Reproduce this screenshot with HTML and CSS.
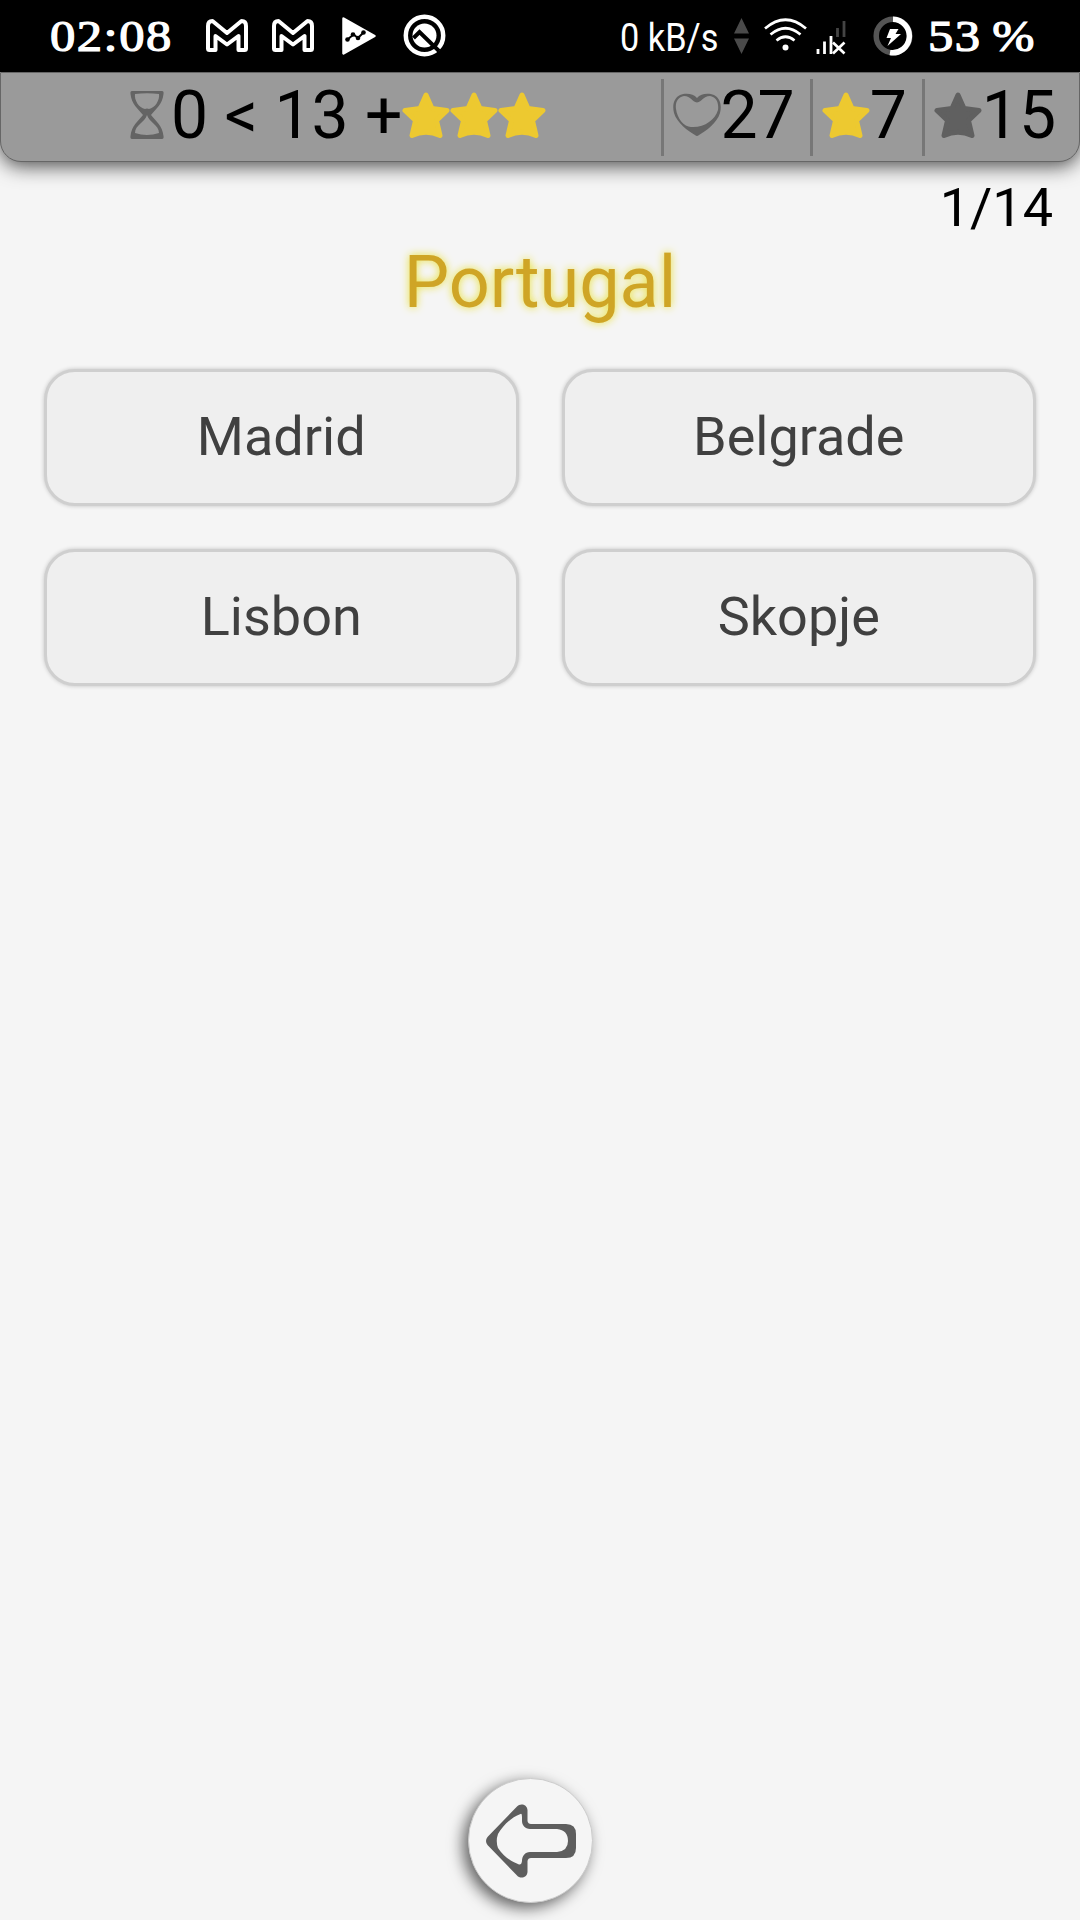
FILE: index.html
```html
<!DOCTYPE html>
<html lang="en">
<head>
    <meta charset="UTF-8">
    <meta name="viewport" content="width=device-width, initial-scale=1.0">
    <title>Capitals Quiz</title>
    <link rel="stylesheet" href="styles.css">
</head>
<body>
    <svg width="0" height="0" class="defs">
        <symbol id="star" viewBox="0 0 48 48">
            <path d="M24 4L30 17.5L45 19.5L34.5 29.5L38 44.5Q24 38 10 44.5L13.5 29.5L3 19.5L18 17.5Z" fill="currentColor" stroke="currentColor" stroke-width="5" stroke-linejoin="round"/>
        </symbol>
        <symbol id="gmail" viewBox="0 0 42 34">
            <path d="M2 7V29.500Q2 31 3.500 31H9.500V17L21 25.500L32.500 17V31H38.500Q40 31 40 29.500V7Q40 2 35.500 2L21 14L6.500 2Q2 2 2 7Z" fill="none" stroke="#fff" stroke-width="4" stroke-linejoin="round"/>
        </symbol>
    </svg>

    <div class="status">
        <span class="clock">02:08</span>
        <svg class="gmail" width="42" height="34"><use href="#gmail"/></svg>
        <svg class="gmail" width="42" height="34"><use href="#gmail"/></svg>
        <svg class="play" width="34" height="38" viewBox="0 0 34 38">
            <path d="M1.500 1.500L32.500 19L1.500 36.500Z" fill="#fff" stroke="#fff" stroke-width="2.500" stroke-linejoin="round"/>
            <path d="M5.500 22.500L11.500 17.500L16 21L21.500 15.500" fill="none" stroke="#000" stroke-width="2"/>
            <g fill="#000"><circle cx="5.500" cy="22.500" r="2.300"/><circle cx="11" cy="17.500" r="2.300"/><circle cx="16" cy="21" r="2.300"/><circle cx="21.500" cy="15.500" r="2.300"/></g>
        </svg>
        <svg class="quick" width="43" height="43" viewBox="0 0 43 43">
            <circle cx="21.500" cy="21.500" r="18.700" fill="none" stroke="#fff" stroke-width="4.500"/>
            <circle cx="21.500" cy="21.500" r="12" fill="#fff"/>
            <path d="M10.500 24L16.500 18L36 37" fill="none" stroke="#000" stroke-width="4"/>
        </svg>

        <span class="speed">0 kB/s</span>
        <svg class="updown" width="15" height="36" viewBox="0 0 15 36"><path d="M7.500 0L15 15.500H0ZM0 20.500H15L7.500 36Z" fill="#4a4a4a"/></svg>
        <svg class="wifi" width="43" height="34" viewBox="0 0 43 34">
            <g fill="none" stroke="#fff" stroke-width="2.700">
                <path d="M1 10.500Q21.500 -7 42 10.500"/>
                <path d="M6.500 16.500Q21.500 4 36.500 16.500"/>
                <path d="M12.500 22.500Q21.500 15 30.500 22.500"/>
            </g>
            <circle cx="21.500" cy="29.500" r="3" fill="#fff"/>
        </svg>
        <svg class="signal" width="30" height="34" viewBox="0 0 30 34">
            <path d="M2 28V33M8.500 20.500V33M15 15V33" stroke="#fff" stroke-width="2.800"/>
            <path d="M21.500 7V16M28 0V16" stroke="#444" stroke-width="2.800"/>
            <path d="M17 21.500L28.500 32.500M28.500 21.500L17 32.500" stroke="#fff" stroke-width="2.700"/>
        </svg>
        <svg class="charge" width="40" height="40" viewBox="0 0 40 40">
            <circle cx="20" cy="20" r="16.800" fill="none" stroke="#555" stroke-width="5.500"/>
            <path d="M20 3.200A16.800 16.800 0 1 1 17 36.600" fill="none" stroke="#fff" stroke-width="5.500"/>
            <path d="M17 13H25.500L22.500 18H28L14.500 30L18 22H13.500Z" fill="#fff"/>
        </svg>
        <span class="battery">53 %</span>
    </div>

    <div class="topbar">
        <div class="goal">
            <svg class="icon" viewBox="0 0 48 48">
                <path fill="#646464" fill-rule="evenodd" d="M9 0H39Q41 0 40.500 3C39.500 13 33 18 28 24C33 30 39.500 35 40.500 45Q41 48 39 48H9Q7 48 7.500 45C8.500 35 15 30 20 24C15 18 8.500 13 7.500 3Q7 0 9 0ZM12 3C11 9 16 17 22 18Q24 17 26 18C32 17 37 9 36 3Q24 1.500 12 3ZM24 24C22 31 12 34 12 42Q24 46 36 42C36 34 26 31 24 24Z"/>
            </svg>
            <span>0 &lt; 13 +</span>
            <svg class="icon gold"><use href="#star"/></svg>
            <svg class="icon gold"><use href="#star"/></svg>
            <svg class="icon gold"><use href="#star"/></svg>
        </div>
        <div class="counter">
            <svg class="icon" viewBox="0 0 48 48">
                <path fill="#646464" fill-rule="evenodd" d="M24 7C28 2 36 2 41 4C47 7 49 14 47 22C44 32 33 40 26 44Q24 46 22 44C15 40 4 32 1 22C-1 14 1 7 7 4C12 2 20 2 24 7ZM24 11.500C19 11 18 5 11 5C5 6 2 11 3 18C4 27 11 36 18 36C31 37 42 29 45 19C46 11 43 6 37 5C30 5 29 11 24 11.500Z"/>
            </svg>
            <span>27</span>
        </div>
        <div class="counter">
            <svg class="icon gold"><use href="#star"/></svg>
            <span>7</span>
        </div>
        <div class="counter">
            <svg class="icon gray"><use href="#star"/></svg>
            <span>15</span>
        </div>
    </div>

    <div class="progress">1/14</div>
    <h1>Portugal</h1>

    <div class="answers">
        <button>Madrid</button>
        <button>Belgrade</button>
        <button>Lisbon</button>
        <button>Skopje</button>
    </div>

    <button class="back" aria-label="Back">
        <svg width="90" height="74" viewBox="0 0 90 74">
            <path fill="#5e5e5e" fill-rule="evenodd" d="M1.500 33L31 2.500C34 -1 41 0 41.500 6V17Q42 20 45 20H80Q90 20 90 30V44Q90 54 80 54H45Q42 54 41.500 57V68C41 74 34 75 31 71.500L1.500 41Q-1.500 37 1.500 33ZM34.500 10C24 14 16 23 12 30Q9.500 37 12 44C18 53 26 58 33 60.500Q35.500 61 36 57C36 52 39 48 44 48H71Q82 47 82 37Q82 26 71 25H44C39 25 36 21 36 17V13Q36 9 34.500 10Z"/>
        </svg>
    </button>
</body>
</html>
```

FILE: styles.css
```css
* {
    box-sizing: border-box;
}
body {
    margin: 0;
    height: 1920px;
    display: flex;
    flex-direction: column;
    background-color: #f5f5f5;
    color: black;
    font-family: Roboto, sans-serif;
    overflow: hidden;
}
svg {
    display: block;
    flex: none;
}
.defs {
    position: absolute;
}
.status {
    height: 72px;
    flex: none;
    display: flex;
    align-items: flex-start;
    background-color: black;
    color: white;
    white-space: nowrap;
}
.clock, .battery {
    font-family: "Liberation Serif", serif;
    font-size: 44px;
    line-height: 50px;
    margin-top: 12px;
    transform: scaleX(1.15);
    transform-origin: 0 0;
    letter-spacing: 1.3px;
    -webkit-text-stroke: 1.2px white;
}
.clock {
    width: 156px;
    margin-left: 50px;
}
.gmail {
    margin-top: 19px;
    margin-right: 24px;
}
.play {
    margin: 17px 0 0 4px;
}
.quick {
    margin: 14px 0 0 27px;
}
.speed {
    width: 114px;
    margin: 15px 0 0 174px;
    font-size: 39px;
    line-height: 46px;
    transform: scaleX(0.88);
    transform-origin: 0 0;
}
.updown {
    margin: 18px 0 0 auto;
}
.wifi {
    margin: 18px 0 0 15px;
}
.signal {
    margin: 21px 0 0 9px;
}
.charge {
    margin: 16px 0 0 27px;
}
.battery {
    width: 152px;
    margin-left: 15px;
    word-spacing: -3px;
}
.topbar {
    height: 90px;
    flex: none;
    display: flex;
    align-items: center;
    padding-right: 8px;
    background-color: #9a9a9a;
    border: 1px solid #666;
    border-radius: 0 0 21px 21px;
    box-shadow: 0 4px 20px rgba(0, 0, 0, 0.7);
    font-size: 66px;
    line-height: 73px;
}
.goal {
    flex: 1;
    display: flex;
    align-items: center;
    justify-content: center;
    padding: 0 0 4px 8px;
    white-space: pre;
}
.counter {
    height: 77px;
    display: flex;
    align-items: center;
    padding: 0 15px 4px 9px;
    border-left: 3px solid #777;
}
.icon {
    width: 48px;
    height: 48px;
}
.gold {
    color: #edc930;
}
.gray {
    color: #606060;
}
.progress {
    margin: 14px 27px 0;
    font-size: 54px;
    line-height: 63px;
    text-align: right;
}
h1 {
    margin: 2px 0 0;
    font-size: 72px;
    line-height: 84px;
    font-weight: normal;
    text-align: center;
    color: #cfa526;
    text-shadow: 0 0 9px #e8e030;
}
.answers {
    display: grid;
    grid-template-columns: 1fr 1fr;
    gap: 43px;
    margin: 44px 44px 0;
}
button {
    font-family: inherit;
    cursor: pointer;
}
.answers button {
    height: 137px;
    padding: 0 0 2px;
    background-color: #efefef;
    border: 3px solid #cfcfcf;
    border-radius: 31px;
    box-shadow: 0 0 4px rgba(0, 0, 0, 0.2);
    color: #404040;
    font-size: 54px;
}
.back {
    width: 125px;
    height: 125px;
    margin: auto 0 17px 468px;
    padding: 0;
    display: flex;
    align-items: center;
    justify-content: center;
    background-color: #f5f5f5;
    border: 1px solid #ccc;
    border-radius: 50%;
    box-shadow: -5px 5px 15px rgba(0, 0, 0, 0.6);
}
```
